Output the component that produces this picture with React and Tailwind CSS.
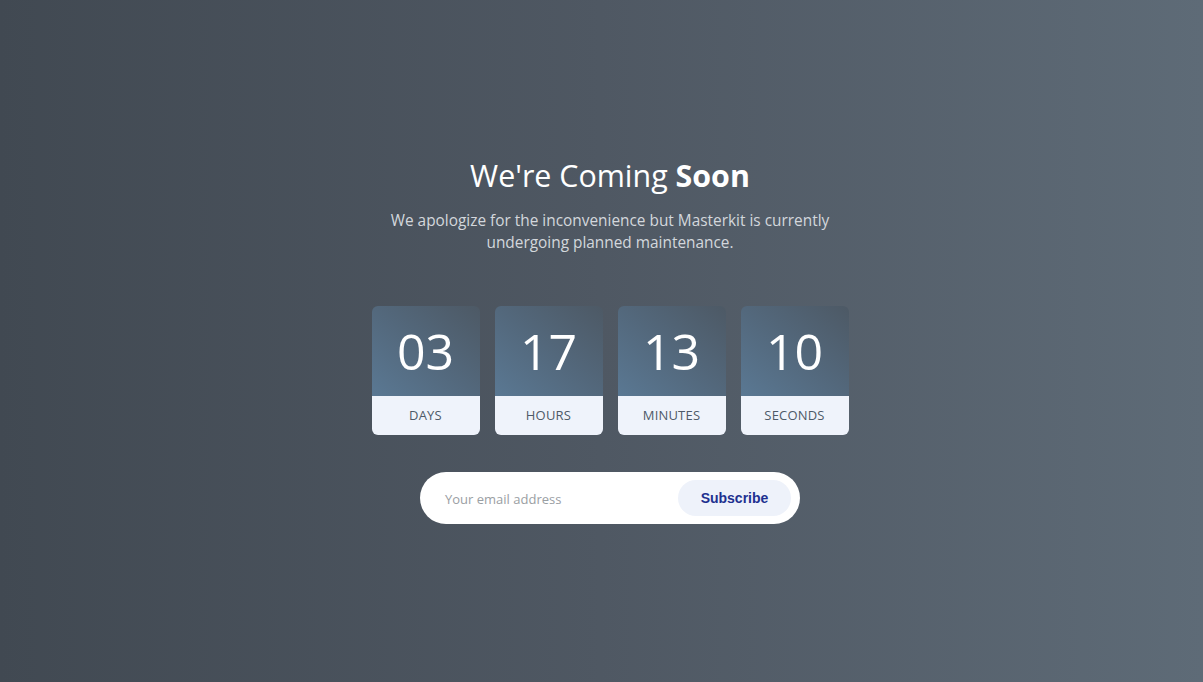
export default function App() {
  const items = [
    ["03", "DAYS"],
    ["17", "HOURS"],
    ["13", "MINUTES"],
    ["10", "SECONDS"],
  ];
  return (
    <div
      className="w-full h-[682px] overflow-hidden bg-linear-to-r from-[#414952] via-[#4f5863] to-[#5e6b77] flex justify-center pl-[17px]"
      style={{ fontFamily: '"Open Sans", sans-serif' }}
    >
      <div className="flex flex-col items-center pt-[156px]">
        <h1 className="text-[30.4px] leading-[40px] text-white font-normal">
          We're Coming <span className="font-bold">Soon</span>
        </h1>
        <p className="mt-[14px] w-[470px] text-center text-[15.4px] leading-[22px] text-[#d3d7dc]">
          We apologize for the inconvenience but Masterkit is currently undergoing planned maintenance.
        </p>
        <div className="mt-[52px] flex gap-[15px]">
          {items.map(([n, l]) => (
            <div key={l} className="w-[108px] rounded-[6px] overflow-hidden">
              <div className="h-[90px] flex items-center justify-center bg-linear-to-tr from-[#5a7893] via-[#53687c] to-[#4d5965] text-white text-[50px] leading-none">
                <span className="-mt-[1px]">{n}</span>
              </div>
              <div className="h-[39px] flex items-center justify-center bg-[#eff3fb] text-[13px] text-[#4e5a68] tracking-[0.2px]">
                {l}
              </div>
            </div>
          ))}
        </div>
        <div className="mt-[37px] w-[380px] h-[52px] rounded-full bg-white flex items-center pl-[25px] pr-[9px]">
          <span className="flex-1 text-[13px] text-[#9a9ea3] pt-[4px]">Your email address</span>
          <button
            className="h-[36px] w-[113px] rounded-full bg-[#eef2fa] text-[14px] font-bold text-[#1e3190]"
            style={{ fontFamily: '"Liberation Sans", Arial, sans-serif' }}
          >
            Subscribe
          </button>
        </div>
      </div>
    </div>
  );
}
